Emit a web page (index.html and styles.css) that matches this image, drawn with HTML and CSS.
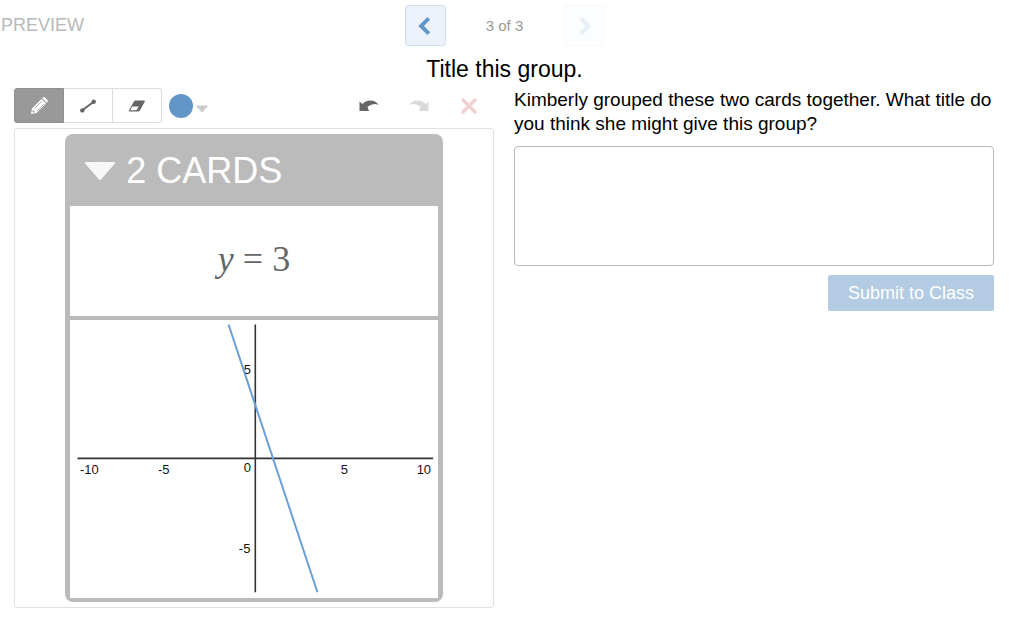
FILE: index.html
```html
<!DOCTYPE html>
<html lang="en">
<head>
    <meta charset="UTF-8">
    <title>Title this group</title>
    <link rel="stylesheet" href="styles.css">
</head>
<body>
    <header>
        <span class="preview">PREVIEW</span>
        <nav class="pager">
            <button type="button" class="page-btn" aria-label="Previous">
                <svg width="40" height="40" viewBox="0 0 40 40"><path d="M22 13.500L15.500 20l6.500 6.500" fill="none" stroke="#6296c8" stroke-width="4" stroke-linecap="square"/></svg>
            </button>
            <span class="count">3 of 3</span>
            <button type="button" class="page-btn" aria-label="Next" disabled>
                <svg width="40" height="40" viewBox="0 0 40 40"><path d="M17.500 13.500L24 20l-6.500 6.500" fill="none" stroke="#6296c8" stroke-width="4" stroke-linecap="square"/></svg>
            </button>
        </nav>
    </header>
    <h1>Title this group.</h1>
    <main>
        <section class="sketch">
            <div class="toolbar">
                <div class="tools">
                    <button type="button" class="tool active" aria-label="Pencil">
                        <svg width="20" height="20" viewBox="0 0 20 20">
                            <path d="M2 18l1-5.500L12.500 3l4.500 4.500L7.500 17z" fill="#fff"/>
                            <path d="M13.200 2.300l1-1q.8-.6 1.600 0l2.900 2.900q.6.8 0 1.600l-1 1z" fill="#fff"/>
                            <path d="M5.500 12.500l7-7M8 15l7-7" stroke="#999" stroke-width="0.800" fill="none"/>
                            <path d="M3.800 13.800l2.400 2.400-2 .4-.8-.8z" fill="#999"/>
                        </svg>
                    </button>
                    <button type="button" class="tool" aria-label="Line">
                        <svg width="20" height="20" viewBox="0 0 20 20">
                            <path d="M4 14.500L16 5.500" stroke="#666" stroke-width="2"/>
                            <circle cx="4.300" cy="14.400" r="2.200" fill="#666"/>
                            <circle cx="15.700" cy="5.700" r="2.200" fill="#666"/>
                        </svg>
                    </button>
                    <button type="button" class="tool" aria-label="Eraser">
                        <svg width="20" height="20" viewBox="0 0 20 20">
                            <path d="M8.500 4.500H17q1.400 0 .7 1.300L13 14.200q-.7 1.300-2 1.300H2.700q-1.400 0-.7-1.200L6.800 5.700Q7.400 4.500 8.500 4.500z" fill="#666"/>
                            <path d="M5.300 10.500h6.400l-1.600 3q-.4.800-1.200.8H3.300z" fill="#fff"/>
                        </svg>
                    </button>
                </div>
                <button type="button" class="color" aria-label="Color">
                    <span class="dot"></span>
                    <svg width="14" height="8" viewBox="0 0 14 8"><path d="M1.500 1h11L7 7z" fill="#ccc" stroke="#ccc" stroke-linejoin="round"/></svg>
                </button>
                <div class="actions">
                    <button type="button" class="action" aria-label="Undo">
                        <svg width="20" height="20" viewBox="0 0 20 20"><path d="M.5 5.500L3.300 8Q7 4.600 11.500 4.600Q17 4.800 19.600 9Q14.500 6.500 8.500 10.700L10 15H.5z" fill="#666"/></svg>
                    </button>
                    <button type="button" class="action" aria-label="Redo" disabled>
                        <svg width="20" height="20" viewBox="0 0 20 20"><path d="M19.500 5.500L16.700 8Q13 4.600 8.500 4.600Q3 4.800.4 9Q5.500 6.500 11.500 10.700L10 15h9.500z" fill="#d9d9d9"/></svg>
                    </button>
                    <button type="button" class="action" aria-label="Clear" disabled>
                        <svg width="20" height="20" viewBox="0 0 20 20"><path d="M4 4l12 12M16 4L4 16" stroke="#f0d0d0" stroke-width="3.500" stroke-linecap="round"/></svg>
                    </button>
                </div>
            </div>
            <div class="canvas">
                <div class="group">
                    <button type="button" class="group-head">
                        <svg width="32" height="20" viewBox="0 0 32 20"><path d="M2 2h28L16 18z" fill="#f7f7f7" stroke="#f7f7f7" stroke-width="2" stroke-linejoin="round"/></svg>
                        2 CARDS
                    </button>
                    <div class="card equation"><i>y</i><span>=</span><span>3</span></div>
                    <div class="card">
                        <!-- graph of y = -3x + 3 -->
                        <svg class="graph" viewBox="0 0 368 278">
                            <path d="M7.500 138.500h356M185.500 4.500v268" stroke="#333" stroke-width="1.600"/>
                            <g class="ticks">
                                <text x="10" y="154">-10</text>
                                <text x="88" y="154">-5</text>
                                <text x="174" y="152">0</text>
                                <text x="271" y="154">5</text>
                                <text x="347" y="154">10</text>
                                <text x="174" y="54">5</text>
                                <text x="169" y="233">-5</text>
                            </g>
                            <path d="M158.700 4.500l89 268" stroke="#6c9ed4" stroke-width="2"/>
                        </svg>
                    </div>
                </div>
            </div>
        </section>
        <section class="question">
            <label for="answer">Kimberly grouped these two cards together. What title do you think she might give this group?</label>
            <textarea id="answer"></textarea>
            <button type="button" class="submit">Submit to Class</button>
        </section>
    </main>
</body>
</html>
```
FILE: styles.css
```css
* {
    box-sizing: border-box;
}
body {
    margin: 0;
    background-color: #fff;
    color: #000;
    font-family: "Liberation Sans", Arial, sans-serif;
}
button {
    margin: 0;
    padding: 0;
    border: 0;
    background: none;
    font-family: inherit;
    cursor: pointer;
}
svg {
    display: block;
}
header {
    display: grid;
    grid-template-columns: 1fr 200px 1fr;
    align-items: center;
    padding-top: 5px;
}
.preview {
    padding-left: 1px;
    color: #b9b9b9;
    font-size: 18px;
}
.pager {
    display: flex;
    justify-content: space-between;
    align-items: center;
}
.page-btn {
    display: flex;
    justify-content: center;
    align-items: center;
    width: 41px;
    height: 41px;
    border: 1px solid #cfdff0;
    border-radius: 3px;
    background-color: #edf2fa;
}
.page-btn:disabled {
    opacity: 0.15;
}
.count {
    color: #999;
    font-size: 15px;
}
h1 {
    margin: 9px 0 5px;
    font-size: 23px;
    font-weight: normal;
    line-height: 28px;
    text-align: center;
}
main {
    display: grid;
    grid-template-columns: 1fr 1fr;
    gap: 20px;
    padding: 0 15px 9px 14px;
}
.toolbar {
    display: flex;
    align-items: center;
    margin-bottom: 5px;
}
.tools {
    display: flex;
}
.tool {
    display: flex;
    justify-content: center;
    align-items: center;
    width: 49px;
    height: 35px;
    border: 1px solid #ddd;
    border-left: 0;
}
.tool:last-child {
    border-radius: 0 3px 3px 0;
}
.tool.active {
    width: 50px;
    border: 1px solid #8f8f8f;
    border-radius: 3px 0 0 3px;
    background-color: #999;
}
.color {
    display: flex;
    align-items: center;
    gap: 2px;
    margin-left: 7px;
}
.color svg {
    margin-top: 6px;
}
.dot {
    width: 24px;
    height: 24px;
    border-radius: 50%;
    background-color: #6296c8;
}
.actions {
    display: flex;
    gap: 30px;
    margin-left: auto;
    margin-right: 15px;
}
.canvas {
    display: flex;
    justify-content: center;
    padding: 5px 0;
    border: 1px solid #e0e0e0;
    border-radius: 3px;
}
.group {
    width: 79%;
    padding: 0 5px 4px;
    border-radius: 8px;
    background-color: #bbb;
}
.group-head {
    display: flex;
    align-items: center;
    gap: 10px;
    width: 100%;
    height: 72px;
    padding-top: 2px;
    padding-left: 14px;
    color: #fff;
    font-size: 36px;
}
.card {
    background-color: #fff;
}
.card + .card {
    margin-top: 4px;
}
.equation {
    display: flex;
    justify-content: center;
    align-items: center;
    gap: 9px;
    height: 110px;
    padding-bottom: 4px;
    color: #666;
    font-family: "Liberation Serif", "Times New Roman", serif;
    font-size: 36px;
}
.graph {
    width: 100%;
}
.ticks {
    fill: #111;
    font-size: 13px;
}
.question {
    display: flex;
    flex-direction: column;
}
.question label {
    font-size: 19px;
    line-height: 24px;
}
textarea {
    width: 100%;
    height: 120px;
    margin: 10px 0 9px;
    padding: 8px;
    border: 1px solid #b9b9b9;
    border-radius: 4px;
    font: inherit;
    resize: none;
}
.submit {
    align-self: flex-end;
    height: 36px;
    padding: 0 20px;
    border-radius: 2px;
    background-color: #b3cbe3;
    color: #fff;
    font-size: 18px;
}
```
